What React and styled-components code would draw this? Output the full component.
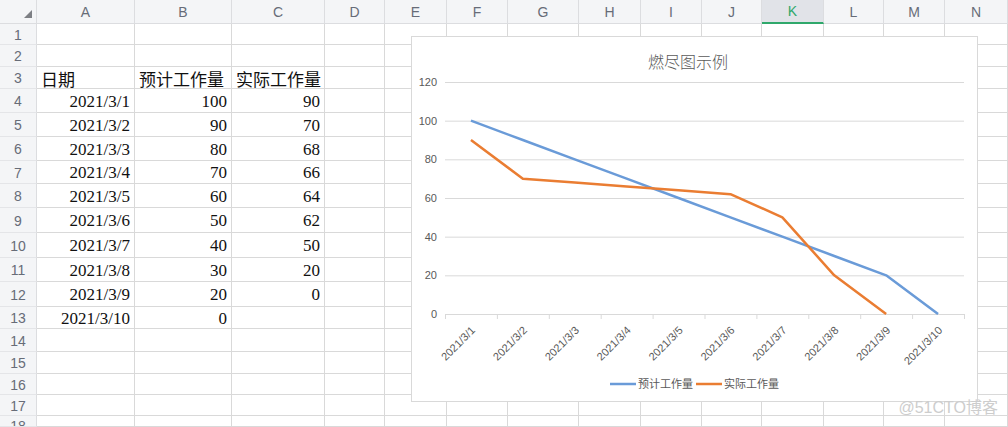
import React from 'react'
import styled, { createGlobalStyle } from 'styled-components'

const GlobalStyle = createGlobalStyle`
  html, body {
    margin: 0;
    padding: 0;
    background: #fff;
    overflow: hidden;
  }
`

const COLS = ['A', 'B', 'C', 'D', 'E', 'F', 'G', 'H', 'I', 'J', 'K', 'L', 'M', 'N']
const COL_WIDTHS = [98, 97, 93, 60, 62, 61, 71, 62, 61, 60, 62, 60, 61]
const ROW_HEIGHTS = [21, 22, 22, 24, 24, 24, 23, 24, 25, 25, 24, 25, 22, 23, 22, 21, 21]

const TABLE = {
  3: [['日期', 'left'], ['预计工作量', 'left'], ['实际工作量', 'left']],
  4: ['2021/3/1', '100', '90'],
  5: ['2021/3/2', '90', '70'],
  6: ['2021/3/3', '80', '68'],
  7: ['2021/3/4', '70', '66'],
  8: ['2021/3/5', '60', '64'],
  9: ['2021/3/6', '50', '62'],
  10: ['2021/3/7', '40', '50'],
  11: ['2021/3/8', '30', '20'],
  12: ['2021/3/9', '20', '0'],
  13: ['2021/3/10', '0', ''],
}

const Page = styled.div`
  position: relative;
  width: 100%;
  height: 100vh;
  overflow: hidden;
`

const Sheet = styled.div`
  display: grid;
  grid-template-columns: 37px ${COL_WIDTHS.map(w => w + 'px').join(' ')} 1fr;
  grid-template-rows: 24px ${ROW_HEIGHTS.map(h => h + 'px').join(' ')} 1fr;
  height: 100%;
`

const Corner = styled.div`
  box-sizing: border-box;
  background: #f4f5f7;
  border-right: 1px solid #dcdde0;
  border-bottom: 1px solid #dcdde0;
  display: flex;
  align-items: flex-end;
  justify-content: flex-end;
  padding: 0 4px 5px 0;
`

const Triangle = styled.div`
  width: 0;
  height: 0;
  border-left: 8px solid transparent;
  border-bottom: 8px solid #7d7f84;
`

const ColHead = styled.div`
  box-sizing: border-box;
  background: ${p => (p.$active ? '#e1e3e8' : '#f4f5f7')};
  border-right: 1px solid #dcdde0;
  border-bottom: ${p => (p.$active ? '2px solid #2fa86b' : '1px solid #dcdde0')};
  color: ${p => (p.$active ? '#2fa86b' : '#676c78')};
  font-family: "Liberation Sans", Arial, sans-serif;
  font-size: 14px;
  display: flex;
  align-items: center;
  justify-content: center;
`

const RowHead = styled.div`
  box-sizing: border-box;
  background: #f4f5f7;
  border-right: 1px solid #dcdde0;
  border-bottom: 1px solid #e4e5e8;
  color: #676c78;
  font-family: "Liberation Sans", Arial, sans-serif;
  font-size: 14px;
  display: flex;
  align-items: ${p => (p.$partial ? 'flex-start' : 'center')};
  justify-content: center;
  padding-top: ${p => (p.$partial ? '2px' : '1px')};
  overflow: hidden;
`

const Cell = styled.div`
  box-sizing: border-box;
  border-right: 1px solid #d9d9d9;
  border-bottom: 1px solid #d9d9d9;
  font-family: "Liberation Serif", "Noto Sans CJK SC", serif;
  font-size: 17px;
  color: #111;
  display: flex;
  align-items: center;
  justify-content: ${p => (p.$align === 'left' ? 'flex-start' : 'flex-end')};
  padding: 2px 4px 0 4px;
  white-space: nowrap;
  overflow: hidden;
`

const ChartBox = styled.div`
  position: absolute;
  left: 411px;
  top: 36px;
  width: 567px;
  height: 366px;
  box-sizing: border-box;
  background: #fff;
  border: 1px solid #d9d9d9;
`

const ChartTitle = styled.text`
  font-family: "Noto Sans CJK SC", sans-serif;
  font-weight: 300;
  font-size: 16px;
  fill: #595959;
`

const AxisText = styled.text`
  font-family: "Liberation Sans", "Noto Sans CJK SC", sans-serif;
  font-size: 11px;
  fill: #595959;
`

const Watermark = styled.div`
  position: absolute;
  right: 10px;
  bottom: 9px;
  font-family: "Liberation Sans", "Noto Sans CJK SC", sans-serif;
  font-size: 16px;
  color: #cdcdcd;
`

const X0 = 33
const X1 = 552
const Y0 = 277
const YT = 45
const STEP = (X1 - X0) / 10
const cx = i => X0 + STEP * (i + 0.5)
const cy = v => Y0 - ((Y0 - YT) * v) / 120

const PLAN = [100, 90, 80, 70, 60, 50, 40, 30, 20, 0]
const ACTUAL = [90, 70, 68, 66, 64, 62, 50, 20, 0]
const DATES = PLAN.map((_, i) => `2021/3/${i + 1}`)
const BLUE = '#6a9bd8'
const ORANGE = '#ea7d32'

const toPoints = arr => arr.map((v, i) => `${cx(i)},${cy(v)}`).join(' ')

function BurnChart() {
  return (
    <svg width="565" height="364" viewBox="0 0 565 364">
      <ChartTitle x="276" y="31" textAnchor="middle">燃尽图示例</ChartTitle>
      {[0, 20, 40, 60, 80, 100, 120].map(v => (
        <g key={v}>
          <line x1={X0} x2={X1} y1={cy(v) + 0.5} y2={cy(v) + 0.5} stroke="#d9d9d9" strokeWidth="1" />
          <AxisText x="25" y={cy(v) + 4} textAnchor="end">{v}</AxisText>
        </g>
      ))}
      {Array.from({ length: 11 }).map((_, i) => (
        <line key={i} x1={X0 + STEP * i + 0.5} x2={X0 + STEP * i + 0.5} y1={Y0} y2={Y0 + 5} stroke="#d9d9d9" />
      ))}
      {DATES.map((d, i) => (
        <AxisText
          key={d}
          x={cx(i) + 5}
          y={Y0 + 17}
          textAnchor="end"
          transform={`rotate(-45 ${cx(i) + 5} ${Y0 + 17})`}
        >
          {d}
        </AxisText>
      ))}
      <polyline points={toPoints(PLAN)} fill="none" stroke={BLUE} strokeWidth="2.5" strokeLinejoin="round" />
      <polyline points={toPoints(ACTUAL)} fill="none" stroke={ORANGE} strokeWidth="2.5" strokeLinejoin="round" />
      <line x1="198" x2="224" y1="347" y2="347" stroke={BLUE} strokeWidth="2.5" />
      <AxisText x="226" y="351">预计工作量</AxisText>
      <line x1="284" x2="310" y1="347" y2="347" stroke={ORANGE} strokeWidth="2.5" />
      <AxisText x="312" y="351">实际工作量</AxisText>
    </svg>
  )
}

export default function App() {
  const rows = ROW_HEIGHTS.length + 1
  return (
    <Page>
      <GlobalStyle />
      <Sheet>
        <Corner>
          <Triangle />
        </Corner>
        {COLS.map(c => (
          <ColHead key={c} $active={c === 'K'}>
            {c}
          </ColHead>
        ))}
        {Array.from({ length: rows }).map((_, r) => {
          const n = r + 1
          const data = TABLE[n] || []
          return (
            <React.Fragment key={n}>
              <RowHead $partial={n === rows}>{n}</RowHead>
              {COLS.map((c, ci) => {
                const v = data[ci]
                const text = Array.isArray(v) ? v[0] : v
                const align = Array.isArray(v) ? v[1] : 'right'
                return (
                  <Cell key={c} $align={align}>
                    {text}
                  </Cell>
                )
              })}
            </React.Fragment>
          )
        })}
      </Sheet>
      <ChartBox>
        <BurnChart />
      </ChartBox>
      <Watermark>@51CTO博客</Watermark>
    </Page>
  )
}
